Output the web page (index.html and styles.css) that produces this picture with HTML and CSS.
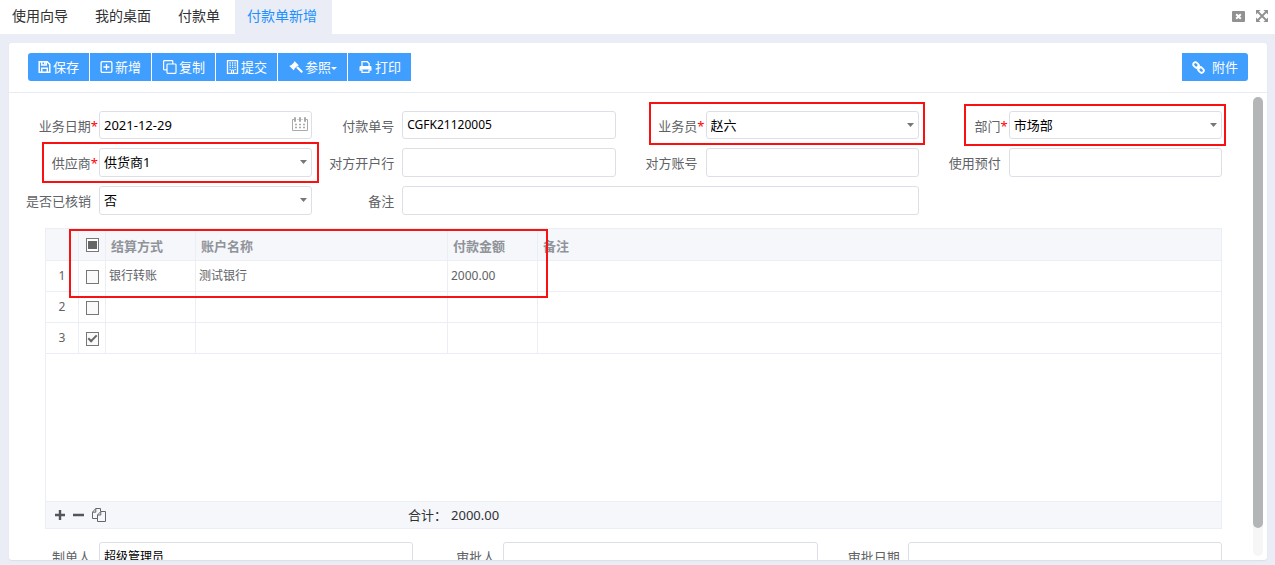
FILE: index.html
```html
<!DOCTYPE html>
<html lang="zh-CN">
<head>
<meta charset="utf-8">
<title>付款单新增</title>
<link rel="stylesheet" href="styles.css">
</head>
<body>
<header class="topbar">
  <nav class="tabs">
    <a class="tab" href="#">使用向导</a>
    <a class="tab" href="#">我的桌面</a>
    <a class="tab" href="#">付款单</a>
    <a class="tab tab-active" href="#">付款单新增</a>
  </nav>
  <div class="window-tools">
    <button class="icon-button" type="button" aria-label="关闭">
      <svg width="13" height="11" viewBox="0 0 13 11"><rect width="13" height="11" rx="1" fill="#919191"/><path d="M4.2 3.2l4.6 4.6M8.8 3.2L4.2 7.8" stroke="#fff" stroke-width="2"/></svg>
    </button>
    <button class="icon-button" type="button" aria-label="全屏">
      <svg width="12" height="12" viewBox="0 0 12 12"><path d="M1.5 1.5l9 9M10.5 1.5l-9 9" stroke="#919191" stroke-width="1.8"/><path d="M0 0h4.6L0 4.6zM12 0v4.6L7.4 0zM0 12V7.4L4.6 12zM12 12H7.4L12 7.4z" fill="#919191"/></svg>
    </button>
  </div>
</header>

<main class="card">
  <div class="toolbar">
    <div class="button-group">
      <button class="btn" type="button">
        <svg width="13" height="12" viewBox="0 0 13 12" fill="none" stroke="#fff" stroke-width="1.5"><path d="M1.2.8h8l2.600 2.600v7.800H1.200z"/><path d="M3.700 11V7.200h5.600V11M3.700.8v3.300h4.600V.8"/><path d="M6.800 1v2.400"/></svg>保存</button>
      <button class="btn" type="button">
        <svg width="13" height="12" viewBox="0 0 13 12" fill="none" stroke="#fff" stroke-width="1.300"><rect x="1.100" y=".7" width="10.800" height="10.600" rx="1.200"/><path d="M6.500 3v6M3.500 6h6"/></svg>新增</button>
      <button class="btn" type="button">
        <svg width="15" height="14" viewBox="0 0 15 14" fill="none" stroke="#fff" stroke-width="1.200"><rect x="5" y="4" width="9" height="9.400" rx=".8"/><path d="M5 9.800H2.400a.8.8 0 0 1-.8-.8V1.400c0-.5.3-.8.8-.8H10c.5 0 .8.3.8.8V4"/></svg>复制</button>
      <button class="btn" type="button">
        <svg width="13" height="14" viewBox="0 0 13 14" fill="none" stroke="#fff"><path d="M1.500.6h10v12.800h-10z" stroke-width="1.300"/><path d="M3.500 3h1.200M6 3h1.200M8.500 3h1.200M3.500 5.200h1.200M6 5.200h1.200M8.500 5.200h1.200M3.500 7.400h1.200M6 7.400h1.200M8.500 7.400h1.200M3.500 9.600h1.200M8.500 9.600h1.200" stroke-width="1.400"/><path d="M5.600 13v-3h1.900v3"/></svg>提交</button>
      <button class="btn" type="button">
        <svg width="15" height="13" viewBox="-1 0 15 13" fill="#fff"><path d="M5.700.2l4 4-.8.8-.5-.2-3.200 3.200.2.600-.8.700-4.200-4.200.8-.8.600.3L5 1.500 4.800 1z"/><path d="M7.200 6.800l1.500-1.500 4.800 4.700c.9.900-.7 2.500-1.600 1.600z"/></svg><span class="btn-text">参照<svg class="btn-caret" width="6" height="3" viewBox="0 0 6 3"><path d="M0 0h6L3 3z" fill="#fff"/></svg></span></button>
      <button class="btn" type="button">
        <svg width="15" height="12" viewBox="-1 0 15 12"><path d="M3 6V.7h5.200l1.900 1.900V6" fill="none" stroke="#fff" stroke-width="1.300"/><path d="M1.800 5h9.400c.8 0 1.300.5 1.300 1.300v3.500h-2V8.500H2.500v1.300h-2V6.300C.5 5.500 1 5 1.800 5z" fill="#fff"/><path d="M3 8.500v2.800h7V8.500" fill="none" stroke="#fff" stroke-width="1.300"/></svg>打印</button>
    </div>
    <button class="btn btn-attach" type="button">
      <svg width="13" height="13" viewBox="0 0 13 13" fill="none" stroke="#fff" stroke-width="1.900"><rect x="1" y="1.800" width="6" height="4.400" rx="2.100" transform="rotate(45 4 4)"/><rect x="6" y="6.800" width="6" height="4.400" rx="2.100" transform="rotate(45 9 9)"/><path d="M5 5l3 3"/></svg>附件</button>
  </div>

  <form class="content">
    <div class="fields">
      <div class="field">
        <label class="label" for="date">业务日期<span class="star">*</span></label>
        <div class="control">
          <input class="box" id="date" type="text" value="2021-12-29">
          <svg class="calendar" width="16" height="16" viewBox="0 0 16 16" fill="none" stroke="#aaa"><path d="M2.500 3.500h-2v11h15v-11h-2M5.500 3.500h1M9.500 3.500h1M2.500 1.500h1v4h-1zM7.500 1.500h1v4h-1zM12.500 1.500h1v4h-1z"/><path d="M3 8.500h2M7 8.500h2M11 8.500h2M3 11.500h2M7 11.500h2M11 11.500h2" stroke-width="1.500"/></svg>
        </div>
      </div>
      <div class="field">
        <label class="label" for="number">付款单号</label>
        <div class="control"><input class="box box-small" id="number" type="text" value="CGFK21120005"></div>
      </div>
      <div class="field mark mark-clerk">
        <label class="label" for="clerk">业务员<span class="star">*</span></label>
        <div class="control"><select class="box" id="clerk"><option>赵六</option></select><svg class="caret" width="7" height="4" viewBox="0 0 7 4"><path d="M0 0h7L3.500 4z" fill="#777"/></svg></div>
      </div>
      <div class="field mark mark-dept">
        <label class="label" for="dept">部门<span class="star">*</span></label>
        <div class="control"><select class="box" id="dept"><option>市场部</option></select><svg class="caret" width="7" height="4" viewBox="0 0 7 4"><path d="M0 0h7L3.500 4z" fill="#777"/></svg></div>
      </div>
      <div class="field mark mark-supplier">
        <label class="label" for="supplier">供应商<span class="star">*</span></label>
        <div class="control"><select class="box" id="supplier"><option>供货商1</option></select><svg class="caret" width="7" height="4" viewBox="0 0 7 4"><path d="M0 0h7L3.500 4z" fill="#777"/></svg></div>
      </div>
      <div class="field">
        <label class="label" for="bank">对方开户行</label>
        <div class="control"><input class="box" id="bank" type="text"></div>
      </div>
      <div class="field">
        <label class="label" for="account">对方账号</label>
        <div class="control"><input class="box" id="account" type="text"></div>
      </div>
      <div class="field">
        <label class="label" for="prepaid">使用预付</label>
        <div class="control"><input class="box" id="prepaid" type="text"></div>
      </div>
      <div class="field">
        <label class="label" for="settled">是否已核销</label>
        <div class="control"><select class="box" id="settled"><option>否</option></select><svg class="caret" width="7" height="4" viewBox="0 0 7 4"><path d="M0 0h7L3.500 4z" fill="#777"/></svg></div>
      </div>
      <div class="field field-wide">
        <label class="label" for="remark">备注</label>
        <div class="control"><input class="box" id="remark" type="text"></div>
      </div>
    </div>

    <section class="grid">
      <table class="table">
        <colgroup><col class="col-no"><col class="col-check"><col class="col-type"><col class="col-name"><col class="col-amount"><col></colgroup>
        <thead>
          <tr><th></th><th class="cell-check"><input class="check check-mixed" type="checkbox" aria-label="全选"></th><th>结算方式</th><th>账户名称</th><th>付款金额</th><th>备注</th></tr>
        </thead>
        <tbody>
          <tr><td class="cell-no">1</td><td class="cell-check"><input class="check" type="checkbox" aria-label="选择第1行"></td><td>银行转账</td><td>测试银行</td><td>2000.00</td><td></td></tr>
          <tr><td class="cell-no">2</td><td class="cell-check"><input class="check" type="checkbox" aria-label="选择第2行"></td><td></td><td></td><td></td><td></td></tr>
          <tr><td class="cell-no">3</td><td class="cell-check"><input class="check" type="checkbox" aria-label="选择第3行" checked></td><td></td><td></td><td></td><td></td></tr>
        </tbody>
      </table>
      <div class="grid-footer">
        <div class="row-tools">
          <button class="icon-button" type="button" aria-label="增加行"><svg width="10" height="10" viewBox="0 0 10 10"><path d="M5 0v10M0 5h10" stroke="#555" stroke-width="2.400"/></svg></button>
          <button class="icon-button" type="button" aria-label="删除行"><svg width="11" height="10" viewBox="0 0 11 10"><path d="M0 5h11" stroke="#555" stroke-width="2.400"/></svg></button>
          <button class="icon-button" type="button" aria-label="复制行"><svg width="14" height="14" viewBox="0 0 14 14" fill="none" stroke="#666"><path d="M5 10.500H.5V4.200L3.800.5h4.700v2.800M3.800.5v3.700H.5"/><path d="M8.800 3.500h4.700v10h-8V7zM8.800 3.500V7H5.500"/></svg></button>
        </div>
        <div class="total"><span>合计：</span><span>2000.00</span></div>
      </div>
    </section>

    <div class="fields fields-bottom">
      <div class="field">
        <label class="label" for="maker">制单人</label>
        <div class="control"><input class="box box-small" id="maker" type="text" value="超级管理员"></div>
      </div>
      <div class="field">
        <label class="label" for="approver">审批人</label>
        <div class="control"><input class="box" id="approver" type="text"></div>
      </div>
      <div class="field">
        <label class="label" for="approved">审批日期</label>
        <div class="control"><input class="box" id="approved" type="text"></div>
      </div>
    </div>
    <div class="scroll-track"><div class="scroll-thumb"></div></div>
  </form>
</main>
</body>
</html>
```

FILE: styles.css
```css
*,
*::before,
*::after {
  box-sizing: border-box;
}

body {
  margin: 0;
  height: 100vh;
  display: flex;
  flex-direction: column;
  overflow: hidden;
  background: #eaedf5;
  color: #606266;
  font: 13px/18px "Noto Sans", "Noto Sans CJK SC", sans-serif;
}

svg {
  display: block;
  flex: none;
}

button,
input,
select {
  margin: 0;
  font: inherit;
}

.topbar {
  display: flex;
  justify-content: space-between;
  height: 34px;
  flex: none;
  background: #fff;
}

.tabs {
  display: flex;
}

.tab {
  padding: 0 15px 0 12px;
  color: #303133;
  font-size: 14px;
  line-height: 32px;
  text-decoration: none;
  white-space: nowrap;
}

.tab-active {
  background: #eaedf5;
  color: #1e90ff;
}

.window-tools {
  display: flex;
  align-items: center;
  gap: 11px;
  padding: 0 7px 2px 0;
}

.icon-button {
  padding: 0;
  border: 0;
  background: none;
}

.card {
  display: flex;
  flex-direction: column;
  flex: 1;
  min-height: 0;
  margin: 9px 8px 5px 9px;
  border-radius: 3px;
  overflow: hidden;
  background: #fff;
  box-shadow: 0 1px 1px #dcdfe8;
}

.toolbar {
  display: flex;
  justify-content: space-between;
  flex: none;
  padding: 10px 19px 11px;
  border-bottom: 1px solid #e8ebf3;
}

.button-group {
  display: flex;
  gap: 1px;
}

.btn {
  display: flex;
  align-items: center;
  gap: 2px;
  height: 28px;
  padding: 0 10px;
  border: 0;
  background: #409eff;
  color: #fff;
  white-space: nowrap;
}

.btn:first-child {
  border-radius: 3px 0 0 3px;
}

.btn-text {
  display: flex;
  align-items: center;
}

.btn-caret {
  margin-top: 2px;
}

.toolbar > .btn-attach {
  gap: 7px;
  border-radius: 0 3px 3px 0;
}

.content {
  position: relative;
  flex: 1;
  min-height: 0;
  overflow: hidden;
  padding: 18px 45px 0 0;
}

.fields {
  display: grid;
  grid-template-columns: repeat(4, 1fr);
  grid-template-rows: 28px 29px 29px;
  row-gap: 9px;
}

.fields-bottom {
  grid-template-columns: repeat(3, 1fr);
  grid-template-rows: 29px;
}

.field {
  display: flex;
  position: relative;
  min-width: 0;
}

.field-wide {
  grid-column: span 2;
}

.label {
  flex: none;
  width: 90px;
  padding: 6px 8px 0 0;
  text-align: right;
  white-space: nowrap;
}

.star {
  margin-right: -7px;
  color: #f00;
}

.control {
  position: relative;
  flex: 1;
  min-width: 0;
}

.box {
  display: block;
  appearance: none;
  width: 100%;
  height: 100%;
  padding: 0 4px 1px;
  border: 1px solid #dcdfe6;
  border-radius: 3px;
  outline: 0;
  background: #fff;
  color: #000;
}

.box-small {
  font-size: 12px;
}

.caret {
  position: absolute;
  right: 5px;
  top: 12px;
}

.calendar {
  position: absolute;
  right: 4px;
  top: 5px;
}

.mark::after,
.grid::after {
  content: "";
  position: absolute;
  border: 2px solid #f91010;
  pointer-events: none;
}

.mark-clerk::after {
  inset: -9px -6px -6px 33px;
}

.mark-dept::after {
  inset: -7px -4px -7px 45px;
}

.mark-supplier::after {
  inset: -6px -7px -6px 33px;
}

.grid {
  display: flex;
  flex-direction: column;
  position: relative;
  min-height: 301px;
  margin: 13px 0 13px 36px;
  border: 1px solid #ebeef5;
}

.grid::after {
  left: 23px;
  top: 0;
  width: 479px;
  height: 69px;
}

.table {
  width: 100%;
  table-layout: fixed;
  border-spacing: 0;
}

.table th,
.table td {
  height: 31px;
  padding: 0 3px;
  border: solid #ebeef5;
  border-width: 0 1px 1px 0;
  font-size: 12px;
  text-align: left;
  white-space: nowrap;
}

.table th {
  height: 32px;
  padding: 2px 5px 0;
  background: #f5f7fb;
  color: #909399;
  font-size: 13px;
}

.table th:last-child,
.table td:last-child {
  border-right: 0;
}

.col-no {
  width: 33px;
}

.col-check {
  width: 27px;
}

.col-type,
.col-amount {
  width: 90px;
}

.col-name {
  width: 252px;
}

.table .cell-no {
  text-align: center;
}

.table .cell-check {
  padding: 1px 0 0 7px;
}

.check {
  display: block;
  appearance: none;
  width: 13px;
  height: 14px;
  border: 1px solid #777;
  background: #fafafa;
}

.check-mixed {
  background: linear-gradient(#666, #666) center / 9px 8px no-repeat #fff;
}

.check:checked::before {
  content: "";
  display: block;
  width: 9px;
  height: 5px;
  margin: 2px 0 0 1px;
  border: solid #666;
  border-width: 0 0 2px 2px;
  transform: rotate(-45deg);
}

.grid-footer {
  display: grid;
  grid-template-columns: 362px auto;
  align-items: center;
  height: 27px;
  margin-top: auto;
  border-top: 1px solid #ebeef5;
  background: #f5f7fb;
  color: #303133;
}

.row-tools {
  display: flex;
  align-items: center;
  gap: 8px;
  padding-left: 9px;
}

.total {
  display: flex;
  gap: 4px;
}

.scroll-track {
  position: absolute;
  right: 4px;
  top: 4px;
  bottom: 4px;
  width: 10px;
  border-radius: 5px;
  background: #f6f6f6;
}

.scroll-thumb {
  height: 94%;
  border-radius: 5px;
  background: #b4b5b7;
}
```
